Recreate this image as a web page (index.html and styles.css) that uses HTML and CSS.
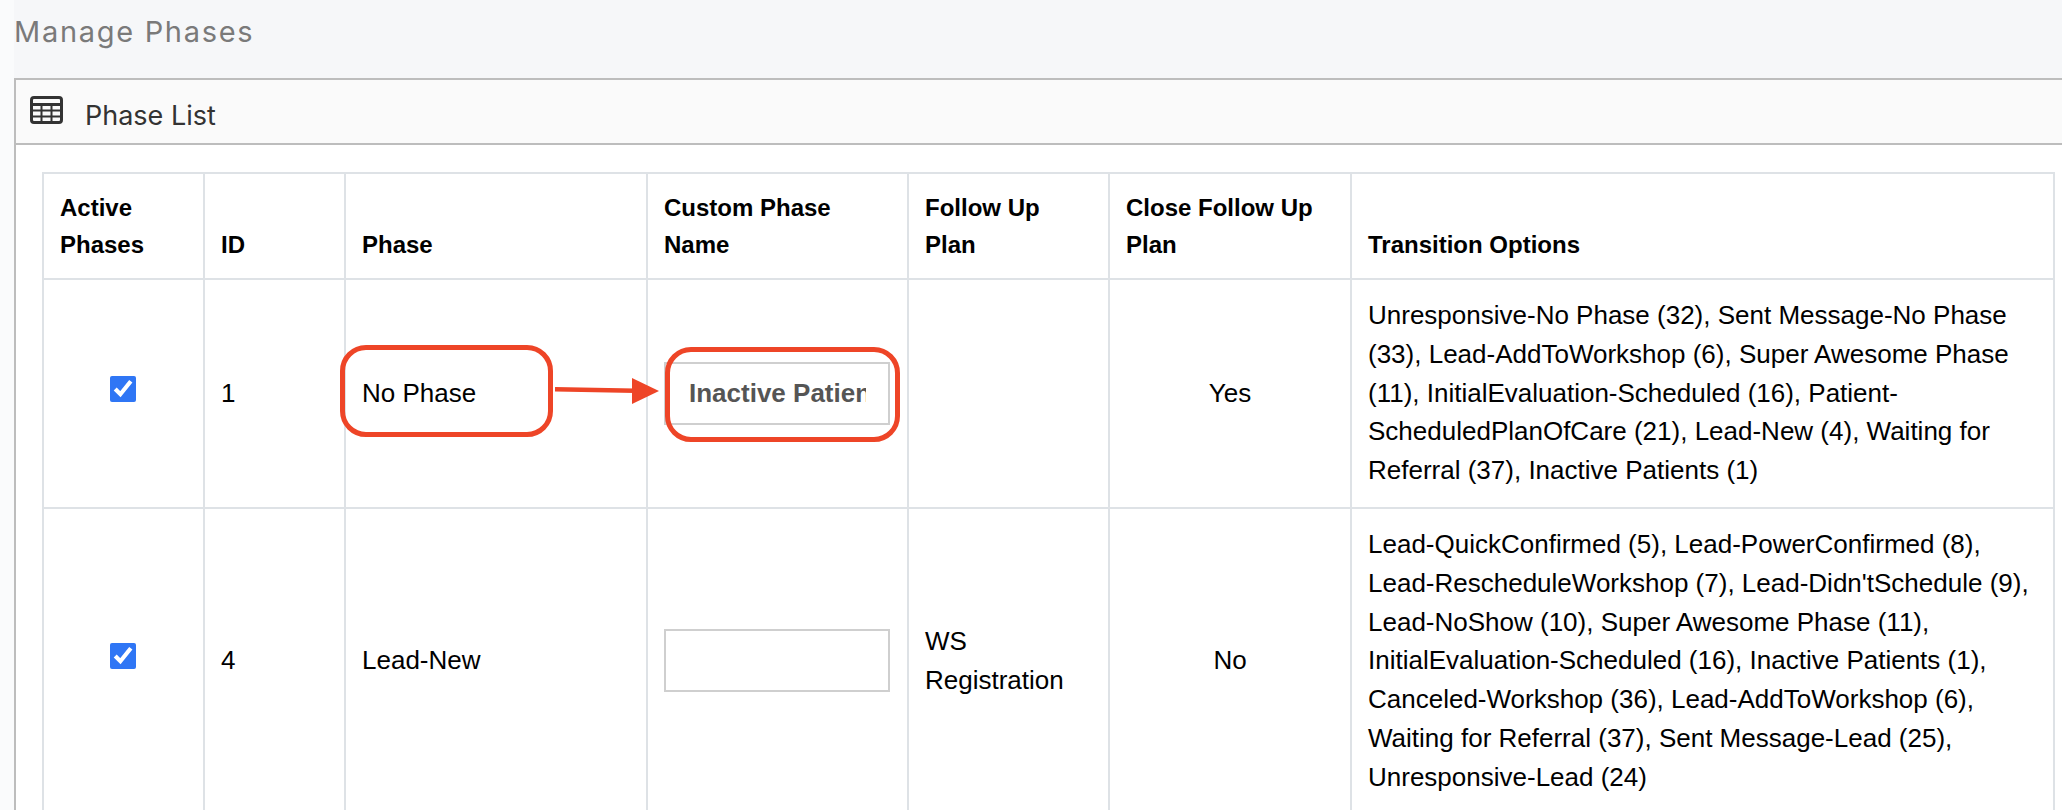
FILE: index.html
```html
<!DOCTYPE html>
<html lang="en">
<head>
<meta charset="utf-8">
<title>Manage Phases</title>
<link rel="stylesheet" href="styles.css">
</head>
<body>
<main class="page">
  <h1 class="title">Manage Phases</h1>
  <section class="panel">
    <header class="panel-head">
      <svg class="table-icon" viewBox="0 0 33 28" aria-hidden="true">
        <rect x="1.5" y="1.5" width="30" height="25" rx="2.5" fill="none" stroke="#333" stroke-width="3"/>
        <path d="M1 8.5h31" stroke="#333" stroke-width="3" fill="none"/>
        <path d="M1 14.5h31M1 20.5h31M11.5 8v19M21.5 8v19" stroke="#333" stroke-width="2" fill="none"/>
      </svg>
      <span class="panel-label">Phase List</span>
    </header>
    <div class="panel-body">
      <table class="phases">
        <colgroup>
          <col class="c-active"><col class="c-id"><col class="c-phase"><col class="c-custom"><col class="c-plan"><col class="c-close"><col class="c-trans">
        </colgroup>
        <thead>
          <tr>
            <th>Active<br>Phases</th>
            <th>ID</th>
            <th>Phase</th>
            <th>Custom Phase<br>Name</th>
            <th>Follow Up<br>Plan</th>
            <th>Close Follow Up<br>Plan</th>
            <th>Transition Options</th>
          </tr>
        </thead>
        <tbody>
          <tr>
            <td class="center"><input class="check" type="checkbox" checked aria-label="Active"></td>
            <td>1</td>
            <td>No Phase</td>
            <td><input class="name" type="text" value="Inactive Patients" aria-label="Custom phase name"></td>
            <td></td>
            <td class="center">Yes</td>
            <td>Unresponsive-No Phase (32), Sent Message-No Phase (33), Lead-AddToWorkshop (6), Super Awesome Phase (11), InitialEvaluation-Scheduled (16), Patient-ScheduledPlanOfCare (21), Lead-New (4), Waiting for Referral (37), Inactive Patients (1)</td>
          </tr>
          <tr>
            <td class="center"><input class="check" type="checkbox" checked aria-label="Active"></td>
            <td>4</td>
            <td>Lead-New</td>
            <td><input class="name" type="text" aria-label="Custom phase name"></td>
            <td>WS Registration</td>
            <td class="center">No</td>
            <td>Lead-QuickConfirmed (5), Lead-PowerConfirmed (8), Lead-RescheduleWorkshop (7), Lead-Didn'tSchedule (9), Lead-NoShow (10), Super Awesome Phase (11), InitialEvaluation-Scheduled (16), Inactive Patients (1), Canceled-Workshop (36), Lead-AddToWorkshop (6), Waiting for Referral (37), Sent Message-Lead (25), Unresponsive-Lead (24)</td>
          </tr>
        </tbody>
      </table>
    </div>
  </section>
</main>
<div class="callout callout-a"></div>
<div class="callout callout-b"></div>
<svg class="arrow" viewBox="0 0 106 28" aria-hidden="true">
  <path d="M0 12.2L80 13.8" stroke="#ee4527" stroke-width="4.5" fill="none"/>
  <path d="M77 1L104 14L77 27Z" fill="#ee4527"/>
</svg>
</body>
</html>
```
FILE: styles.css
```css
html, body {
  margin: 0;
  height: 810px;
  overflow: hidden;
  background: #fafbfc;
}
.page {
  margin-left: 14px;
  height: 810px;
  background: #f6f7f9;
  overflow: hidden;
}
.title {
  margin: 0;
  height: 78px;
  padding-top: 12px;
  box-sizing: border-box;
  font-family: Inter, sans-serif;
  font-weight: 400;
  font-size: 29px;
  line-height: 40px;
  letter-spacing: 1.7px;
  color: #7a7a7a;
}
.panel {
  border-top: 2px solid #bdbdbd;
  border-left: 2px solid #bdbdbd;
  background: #fff;
  height: 731px;
}
.panel-head {
  display: flex;
  align-items: center;
  height: 65px;
  box-sizing: border-box;
  padding-left: 14px;
  background: #fafafa;
  border-bottom: 2px solid #bdbdbd;
  font-family: Inter, sans-serif;
  font-size: 27px;
  color: #333;
}
.panel-label {
  margin-top: 8px;
}
.table-icon {
  width: 33px;
  height: 28px;
  margin-right: 22px;
  margin-top: -4px;
}
.panel-body {
  padding: 27px 0 0 26px;
}
.phases {
  width: 2013px;
  table-layout: fixed;
  border-collapse: collapse;
  font-family: "Liberation Sans", Arial, sans-serif;
  font-size: 26px;
  line-height: 38.8px;
  color: #000;
}
.c-active { width: 161px; }
.c-id { width: 141px; }
.c-phase { width: 302px; }
.c-custom { width: 261px; }
.c-plan { width: 201px; }
.c-close { width: 242px; }
.phases th, .phases td {
  border: 2px solid #dee2e6;
  padding: 16.5px 16px;
  text-align: left;
}
.phases th {
  vertical-align: bottom;
  padding: 16px 16px 14px;
  font-size: 24px;
  line-height: 36.8px;
  font-weight: 700;
}
.phases td {
  vertical-align: middle;
}
.phases td.center {
  text-align: center;
}
.check {
  width: 26px;
  height: 26px;
  margin: 0 2px 0 0;
  accent-color: #2f76f5;
}
.name {
  display: block;
  width: 226px;
  height: 63px;
  box-sizing: border-box;
  padding: 0 22px 0 23px;
  border: 2px solid #cfcfcf;
  border-radius: 0;
  background: #fff;
  font-family: "Liberation Sans", Arial, sans-serif;
  font-size: 26px;
  font-weight: 700;
  color: #555;
}
.callout {
  position: absolute;
  box-sizing: border-box;
  border: 5px solid #ee4527;
  border-radius: 26px;
}
.callout-a { left: 340px; top: 345px; width: 213px; height: 92px; }
.callout-b { left: 665px; top: 347px; width: 235px; height: 95px; }
.arrow {
  position: absolute;
  left: 555px;
  top: 377px;
  width: 106px;
  height: 28px;
}
```
